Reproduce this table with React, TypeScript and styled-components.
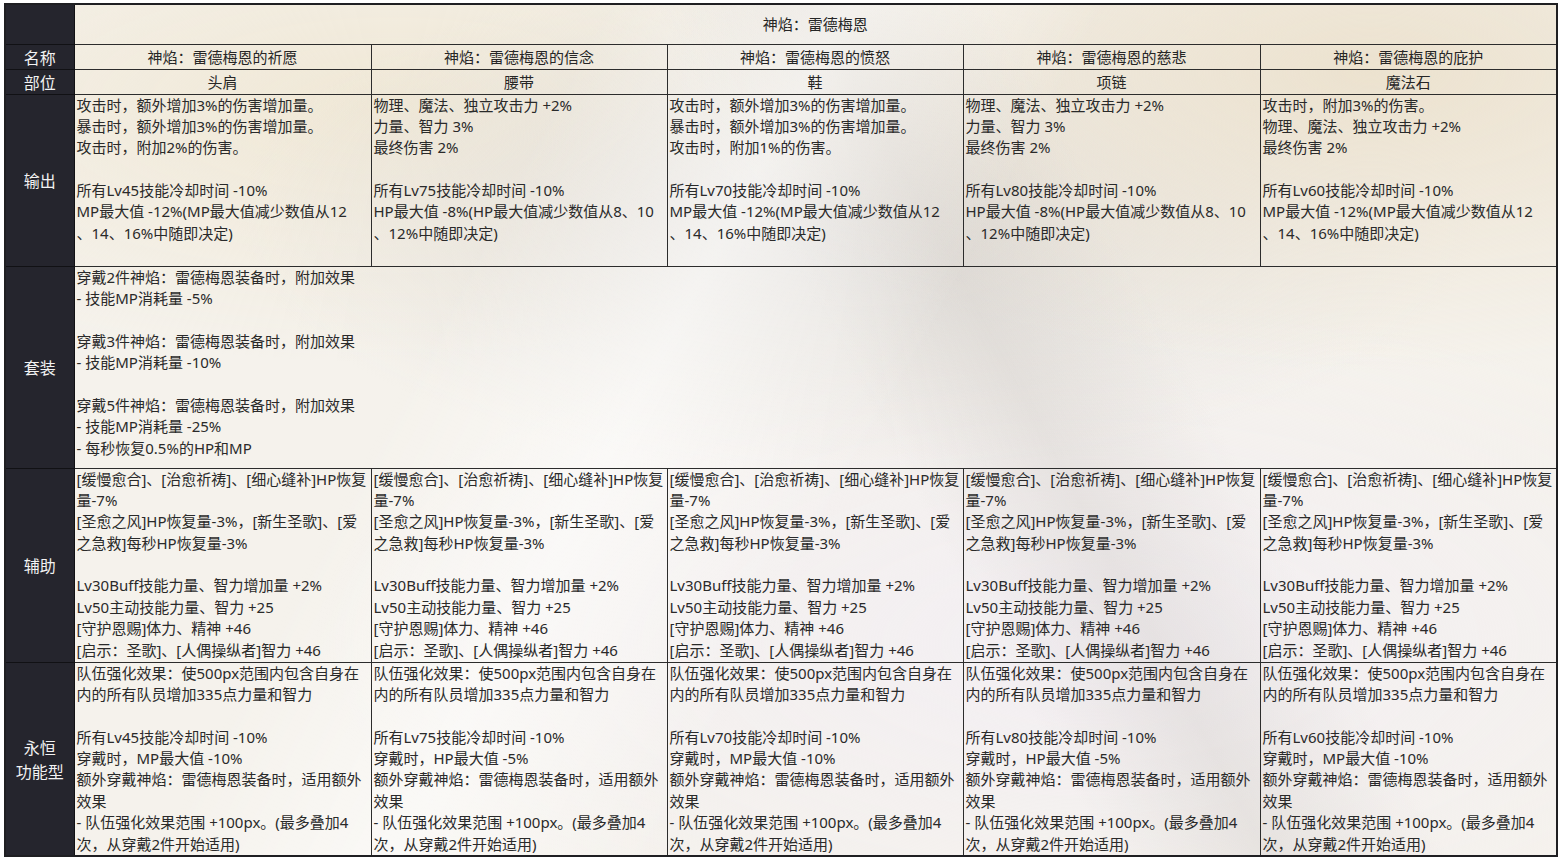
import styled, { createGlobalStyle } from 'styled-components';

const GlobalStyle = createGlobalStyle`
	html, body {
		margin: 0;
		padding: 0;
		background: #ffffff;
	}
	body {
		font-family: 'Noto Sans', 'Noto Sans CJK SC', sans-serif;
		color: #2a2a2a;
	}
`;

const Page = styled.div`
	padding: 3px 0 0 4px;
	width: 1562px;
	height: 862px;
	box-sizing: border-box;
	overflow: hidden;
`;

const Sheet = styled.table`
	width: 1554px;
	table-layout: fixed;
	border-collapse: collapse;
	border: 2px solid #1f1f22;
	background:
		linear-gradient(118deg, rgba(255, 255, 255, 0) 30%, rgba(255, 255, 255, 0.55) 42%, rgba(255, 255, 255, 0) 55%),
		linear-gradient(62deg, rgba(255, 255, 255, 0) 55%, rgba(205, 200, 196, 0.35) 63%, rgba(255, 255, 255, 0) 72%),
		radial-gradient(ellipse 45% 35% at 88% 8%, #ece2cf 0%, rgba(236, 226, 207, 0) 100%),
		radial-gradient(ellipse 40% 30% at 55% 25%, #e2dfdc 0%, rgba(226, 223, 220, 0) 100%),
		radial-gradient(ellipse 45% 30% at 25% 12%, #f0e8d6 0%, rgba(240, 232, 214, 0) 100%),
		radial-gradient(ellipse 50% 40% at 70% 75%, #f3eff3 0%, rgba(243, 239, 243, 0) 100%),
		#f5f2ec;
`;

const Row = styled.tr<{ h: number }>`
	height: ${props => props.h}px;
`;

const Label = styled.th`
	width: 68px;
	background: #25252d;
	color: #f2f2f2;
	font-family: 'Noto Sans CJK SC', sans-serif;
	font-size: 16px;
	font-weight: normal;
	line-height: 24px;
	text-align: center;
	vertical-align: middle;
	border: 1px solid #111114;
	padding: 0;
`;

const HeadCell = styled.td`
	border: 1px solid #2c2c2c;
	font-size: 15px;
	line-height: 18px;
	text-align: center;
	vertical-align: middle;
	padding: 0;
	color: #262626;
`;

const BodyCell = styled.td`
	border: 1px solid #2c2c2c;
	vertical-align: top;
	padding: 0 0 0 2px;
	overflow: hidden;
`;

const Line = styled.div`
	font-size: 15px;
	line-height: 21.4px;
	height: 21.4px;
	white-space: nowrap;
	color: #2a2a2a;
`;

interface Item {
	name: string;
	part: string;
	output: string[];
	eternal: string[];
}

const cd = (lv: number) => `所有Lv${lv}技能冷却时间 -10%`;

const eternal = (lv: number, stat: string) => [
	'队伍强化效果：使500px范围内包含自身在',
	'内的所有队员增加335点力量和智力',
	'',
	cd(lv),
	`穿戴时，${stat}`,
	'额外穿戴神焰：雷德梅恩装备时，适用额外',
	'效果',
	'- 队伍强化效果范围 +100px。(最多叠加4',
	'次，从穿戴2件开始适用)'
];

const mpLines = ['MP最大值 -12%(MP最大值减少数值从12', '、14、16%中随即决定)'];
const hpLines = ['HP最大值 -8%(HP最大值减少数值从8、10', '、12%中随即决定)'];
const statLines = ['物理、魔法、独立攻击力 +2%', '力量、智力 3%', '最终伤害 2%'];

const items: Item[] = [
	{
		name: '神焰：雷德梅恩的祈愿',
		part: '头肩',
		output: ['攻击时，额外增加3%的伤害增加量。', '暴击时，额外增加3%的伤害增加量。', '攻击时，附加2%的伤害。', '', cd(45), ...mpLines],
		eternal: eternal(45, 'MP最大值 -10%')
	},
	{
		name: '神焰：雷德梅恩的信念',
		part: '腰带',
		output: [...statLines, '', cd(75), ...hpLines],
		eternal: eternal(75, 'HP最大值 -5%')
	},
	{
		name: '神焰：雷德梅恩的愤怒',
		part: '鞋',
		output: ['攻击时，额外增加3%的伤害增加量。', '暴击时，额外增加3%的伤害增加量。', '攻击时，附加1%的伤害。', '', cd(70), ...mpLines],
		eternal: eternal(70, 'MP最大值 -10%')
	},
	{
		name: '神焰：雷德梅恩的慈悲',
		part: '项链',
		output: [...statLines, '', cd(80), ...hpLines],
		eternal: eternal(80, 'HP最大值 -5%')
	},
	{
		name: '神焰：雷德梅恩的庇护',
		part: '魔法石',
		output: ['攻击时，附加3%的伤害。', '物理、魔法、独立攻击力 +2%', '最终伤害 2%', '', cd(60), ...mpLines],
		eternal: eternal(60, 'MP最大值 -10%')
	}
];

const setLines = [
	'穿戴2件神焰：雷德梅恩装备时，附加效果',
	'- 技能MP消耗量 -5%',
	'',
	'穿戴3件神焰：雷德梅恩装备时，附加效果',
	'- 技能MP消耗量 -10%',
	'',
	'穿戴5件神焰：雷德梅恩装备时，附加效果',
	'- 技能MP消耗量 -25%',
	'- 每秒恢复0.5%的HP和MP'
];

const supportLines = [
	'[缓慢愈合]、[治愈祈祷]、[细心缝补]HP恢复',
	'量-7%',
	'[圣愈之风]HP恢复量-3%，[新生圣歌]、[爱',
	'之急救]每秒HP恢复量-3%',
	'',
	'Lv30Buff技能力量、智力增加量 +2%',
	'Lv50主动技能力量、智力 +25',
	'[守护恩赐]体力、精神 +46',
	'[启示：圣歌]、[人偶操纵者]智力 +46'
];

const colWidths = [297, 296, 296, 297, 297];

function Lines({ lines }: { lines: string[] }) {
	return (
		<>
			{lines.map((text, i) => (
				<Line key={i}>{text || '\u00a0'}</Line>
			))}
		</>
	);
}

function App() {
	return (
		<Page>
			<GlobalStyle />
			<Sheet>
				<colgroup>
					<col style={{ width: 69 }} />
					{colWidths.map((w, i) => (
						<col key={i} style={{ width: w }} />
					))}
				</colgroup>
				<tbody>
					<Row h={40}>
						<Label />
						<HeadCell colSpan={5}>神焰：雷德梅恩</HeadCell>
					</Row>
					<Row h={23}>
						<Label>名称</Label>
						{items.map(item => (
							<HeadCell key={item.name}>{item.name}</HeadCell>
						))}
					</Row>
					<Row h={22}>
						<Label>部位</Label>
						{items.map(item => (
							<HeadCell key={item.part}>{item.part}</HeadCell>
						))}
					</Row>
					<Row h={172}>
						<Label>输出</Label>
						{items.map(item => (
							<BodyCell key={item.name}>
								<Lines lines={item.output} />
							</BodyCell>
						))}
					</Row>
					<Row h={202}>
						<Label>套装</Label>
						<BodyCell colSpan={5}>
							<Lines lines={setLines} />
						</BodyCell>
					</Row>
					<Row h={194}>
						<Label>辅助</Label>
						{items.map(item => (
							<BodyCell key={item.name}>
								<Lines lines={supportLines} />
							</BodyCell>
						))}
					</Row>
					<Row h={194}>
						<Label>
							永恒
							<br />
							功能型
						</Label>
						{items.map(item => (
							<BodyCell key={item.name}>
								<Lines lines={item.eternal} />
							</BodyCell>
						))}
					</Row>
				</tbody>
			</Sheet>
		</Page>
	);
}

export default App;
